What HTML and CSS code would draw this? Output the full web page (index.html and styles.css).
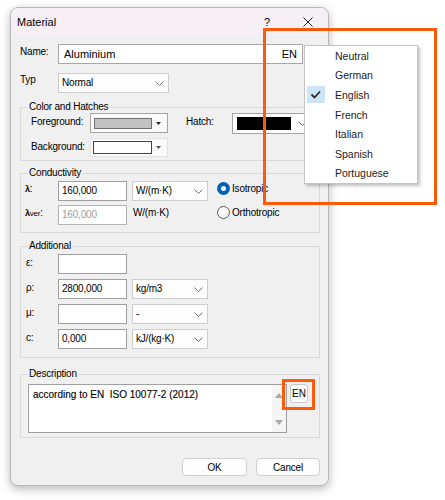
FILE: index.html
```html
<!DOCTYPE html>
<html lang="en">

<head>
    <meta charset="utf-8">
    <title>Material</title>
    <link rel="stylesheet" href="styles.css">
</head>

<body>
    <div class="dialog">
        <div class="titlebar">
            <span class="title">Material</span>
            <span class="help">?</span>
            <span class="close">
                <svg width="10" height="10" viewBox="0 0 10 10"><path d="M0.5 0.5 L9.5 9.5 M9.5 0.5 L0.5 9.5" stroke="#1e1e1e" stroke-width="1" fill="none"/></svg>
            </span>
        </div>

        <div class="content">
            <div class="row name-row">
                <label class="lbl">Name:</label>
                <div class="field name-field"><span>Aluminium</span><span>EN</span></div>
            </div>
            <div class="row typ-row">
                <label class="lbl">Typ</label>
                <div class="combo typ">Normal
                    <svg class="chev" width="9" height="5" viewBox="0 0 9 5"><polyline points="0.5,0.5 4.5,4.5 8.5,0.5" fill="none" stroke="#707070"/></svg>
                </div>
            </div>

            <fieldset class="group colors">
                <legend>Color and Hatches</legend>
                <div class="row">
                    <label class="lbl-c">Foreground:</label>
                    <div class="swatch-box fg">
                        <span class="swatch grey"></span>
                        <svg width="5" height="3" viewBox="0 0 5 3"><polygon points="0,0 5,0 2.5,3" fill="#222"/></svg>
                    </div>
                    <label class="lbl-hatch">Hatch:</label>
                    <div class="combo hatch">
                        <span class="swatch black"></span>
                        <svg class="chev" width="9" height="5" viewBox="0 0 9 5"><polyline points="0.5,0.5 4.5,4.5 8.5,0.5" fill="none" stroke="#707070"/></svg>
                    </div>
                </div>
                <div class="row">
                    <label class="lbl-c">Background:</label>
                    <div class="swatch-box bg">
                        <span class="swatch white"></span>
                        <svg width="5" height="3" viewBox="0 0 5 3"><polygon points="0,0 5,0 2.5,3" fill="#555"/></svg>
                    </div>
                </div>
            </fieldset>

            <fieldset class="group conduct">
                <legend>Conductivity</legend>
                <div class="row">
                    <label class="lbl-s"><span class="sym">λ</span>:</label>
                    <div class="input">160,000</div>
                    <div class="combo unit">W/(m·K)
                        <svg class="chev" width="9" height="5" viewBox="0 0 9 5"><polyline points="0.5,0.5 4.5,4.5 8.5,0.5" fill="none" stroke="#707070"/></svg>
                    </div>
                    <div class="radio">
                        <span class="dot on"></span>
                        <span>Isotropic</span>
                    </div>
                </div>
                <div class="row">
                    <label class="lbl-s"><span class="sym">λ</span><span class="sub">ver</span>:</label>
                    <div class="input off">160,000</div>
                    <div class="unit-text">W/(m·K)</div>
                    <div class="radio">
                        <span class="dot"></span>
                        <span>Orthotropic</span>
                    </div>
                </div>
            </fieldset>

            <fieldset class="group extra">
                <legend>Additional</legend>
                <div class="row">
                    <label class="lbl-s">ε:</label>
                    <div class="input"></div>
                </div>
                <div class="row">
                    <label class="lbl-s">ρ:</label>
                    <div class="input">2800,000</div>
                    <div class="combo unit">kg/m3
                        <svg class="chev" width="9" height="5" viewBox="0 0 9 5"><polyline points="0.5,0.5 4.5,4.5 8.5,0.5" fill="none" stroke="#707070"/></svg>
                    </div>
                </div>
                <div class="row">
                    <label class="lbl-s">μ:</label>
                    <div class="input"></div>
                    <div class="combo unit">-
                        <svg class="chev" width="9" height="5" viewBox="0 0 9 5"><polyline points="0.5,0.5 4.5,4.5 8.5,0.5" fill="none" stroke="#707070"/></svg>
                    </div>
                </div>
                <div class="row">
                    <label class="lbl-s">c:</label>
                    <div class="input">0,000</div>
                    <div class="combo unit">kJ/(kg·K)
                        <svg class="chev" width="9" height="5" viewBox="0 0 9 5"><polyline points="0.5,0.5 4.5,4.5 8.5,0.5" fill="none" stroke="#707070"/></svg>
                    </div>
                </div>
            </fieldset>

            <fieldset class="group desc">
                <legend>Description</legend>
                <div class="row">
                    <div class="memo">
                        <div class="memo-text">according to EN&nbsp; ISO 10077-2 (2012)</div>
                        <div class="scroll">
                            <svg width="8" height="5" viewBox="0 0 8 5"><polygon points="0,5 8,5 4,0" fill="#a9a9a9"/></svg>
                            <svg width="8" height="5" viewBox="0 0 8 5"><polygon points="0,0 8,0 4,5" fill="#a9a9a9"/></svg>
                        </div>
                    </div>
                    <button class="lang-btn">EN</button>
                </div>
            </fieldset>

            <div class="buttons">
                <button class="btn">OK</button>
                <button class="btn">Cancel</button>
            </div>
        </div>
    </div>

    <!-- language popup -->
    <div class="lang-menu">
        <div class="item"><span class="check"></span>Neutral</div>
        <div class="item"><span class="check"></span>German</div>
        <div class="item"><span class="check on">
            <svg width="18" height="17" viewBox="0 0 18 17"><polyline points="4.5,8.5 7.5,11.5 13,5.5" fill="none" stroke="#2b2b2b" stroke-width="1.8"/></svg>
        </span>English</div>
        <div class="item"><span class="check"></span>French</div>
        <div class="item"><span class="check"></span>Italian</div>
        <div class="item"><span class="check"></span>Spanish</div>
        <div class="item"><span class="check"></span>Portuguese</div>
    </div>

    <div class="mark mark-big"></div>
    <div class="mark mark-small"></div>
</body>

</html>
```

FILE: styles.css
```css
* {
    box-sizing: border-box;
}

body {
    margin: 0;
    width: 445px;
    height: 500px;
    overflow: hidden;
    position: relative;
    background-color: #fff;
    font-family: "Liberation Sans", Arial, sans-serif;
    font-size: 10px;
    letter-spacing: -0.2px;
    color: #000;
}

/* window */

.dialog {
    margin: 7px 0 0 10px;
    width: 319px;
    height: 479px;
    border: 1px solid #b8b8b8;
    border-radius: 8px;
    background-color: #f0f0f0;
    box-shadow: 0 3px 10px rgba(0, 0, 0, 0.28);
    overflow: hidden;
}

.titlebar {
    height: 27px;
    display: flex;
    align-items: center;
    padding-left: 6px;
    background-color: #f6eff6;
}

.title {
    flex: 1;
    font-size: 11px;
    letter-spacing: 0;
}

.help {
    width: 20px;
    margin-right: 19px;
    text-align: center;
    font-size: 11px;
}

.close {
    width: 24px;
    margin-right: 8px;
    display: flex;
    justify-content: center;
}

.content {
    padding: 9px 8px 0 9px;
}

.row {
    display: flex;
    align-items: flex-start;
    line-height: 12px;
}

/* name + typ */

.lbl {
    width: 38px;
}

.name-row {
    height: 20px;
    margin-bottom: 9px;
}

.name-row .lbl {
    padding-top: 2px;
}

.typ-row .lbl {
    padding-top: 1px;
}

.field {
    height: 20px;
    background-color: #fff;
    border: 1px solid #a8a8a8;
}

.name-field {
    width: 245px;
    display: flex;
    justify-content: space-between;
    align-items: center;
    padding: 0 5px;
    font-size: 11px;
    letter-spacing: 0;
}

.combo {
    height: 20px;
    display: flex;
    align-items: center;
    justify-content: space-between;
    padding: 0 4px 0 3px;
    background-color: #fdfdfd;
    border: 1px solid #cdcdcd;
}

.typ {
    width: 111px;
}

/* group boxes */

.group {
    margin: 0;
    min-width: 0;
    padding: 0;
    border: 1px solid #d9d9d9;
}

.group legend {
    padding: 0 2px;
    height: 12px;
    line-height: 12px;
}

.colors {
    margin-top: 8px;
    padding: 0 0 3px 10px;
}

.colors legend {
    margin-left: -4px;
}

.colors .row + .row {
    margin-top: 4px;
}

.lbl-c {
    width: 59px;
    padding-top: 3px;
}

.swatch-box {
    width: 78px;
    height: 20px;
    display: flex;
    align-items: center;
    gap: 4px;
    padding-left: 3px;
    border: 1px solid #a4a4a4;
    background-color: #fafafa;
}

.swatch-box.bg {
    height: 19px;
    padding-left: 2px;
    border-color: #e2e2e2;
}

.swatch {
    display: block;
    border: 1px solid #6e6e6e;
}

.swatch.grey {
    width: 58px;
    height: 11px;
    background-color: #c2c2c2;
}

.swatch.white {
    width: 59px;
    height: 13px;
    background-color: #fff;
    border-color: #444;
}

.swatch.black {
    width: 54px;
    height: 13px;
    background-color: #000;
    border-color: #000;
}

.lbl-hatch {
    width: 46px;
    margin-left: 18px;
    padding-top: 3px;
}

.hatch {
    width: 80px;
    height: 21px;
    padding-left: 4px;
    border-color: #a4a4a4;
}

.conduct {
    margin-top: 6px;
    padding: 2px 0 7px 4px;
}

.conduct legend {
    margin-left: 2px;
}

.conduct .row + .row {
    margin-top: 4px;
}

.extra {
    margin-top: 7px;
    padding: 2px 0 8px 5px;
}

.extra legend {
    margin-left: 1px;
}

.extra .row + .row {
    margin-top: 5px;
}

.extra .lbl-s {
    width: 32px;
    padding-top: 3px;
}

.lbl-s {
    width: 33px;
    padding-top: 2px;
}

.sym {
    font-size: 9px;
    font-weight: bold;
}

.sub {
    font-size: 8px;
}

.input {
    width: 69px;
    height: 20px;
    padding: 0 3px;
    line-height: 17px;
    background-color: #fff;
    border: 1px solid #a0a0a0;
}

.input.off {
    color: #9c9c9c;
    border-color: #b4b4b4;
}

.unit {
    width: 76px;
    margin-left: 5px;
}

.unit-text {
    width: 76px;
    margin-left: 5px;
    padding: 2px 0 0 1px;
}

.radio {
    display: flex;
    align-items: center;
    gap: 2px;
    margin: 1px 0 0 9px;
}

.dot {
    width: 13px;
    height: 13px;
    border-radius: 50%;
    border: 1px solid #5c5c5c;
    background-color: #f7f7f7;
}

.dot.on {
    border: 4px solid #0061b8;
    background-color: #fff;
}

.desc {
    margin-top: 10px;
    padding: 4px 0 4px 7px;
}

.desc legend {
    margin-left: -1px;
}

.memo {
    width: 259px;
    height: 49px;
    display: flex;
    background-color: #fff;
    border: 1px solid #a0a0a0;
}

.memo-text {
    flex: 1;
    padding: 3px 0 0 4px;
    line-height: 14px;
    font-size: 10px;
    letter-spacing: 0;
    -webkit-text-stroke: 0.12px #000;
}

.scroll {
    width: 14px;
    display: flex;
    flex-direction: column;
    justify-content: space-between;
    align-items: center;
    padding: 8px 0 7px;
    background-color: #f5f5f5;
}

.lang-btn {
    width: 18px;
    height: 19px;
    margin-left: 3px;
    padding: 0;
    font-family: inherit;
    font-size: 10px;
    letter-spacing: 0;
    background-color: #fdfdfd;
    border: 1px solid #c9c9c9;
    border-radius: 3px;
}

.buttons {
    display: flex;
    justify-content: flex-end;
    gap: 9px;
    margin-top: 20px;
}

.btn {
    width: 65px;
    height: 18px;
    padding: 0;
    font-family: inherit;
    font-size: 10px;
    letter-spacing: -0.2px;
    background-color: #fdfdfd;
    border: 1px solid #cfcfcf;
    border-radius: 4px;
}

.btn + .btn {
    width: 64px;
}

/* popup menu */

.lang-menu {
    position: absolute;
    left: 304px;
    top: 45px;
    width: 114px;
    background-color: #fff;
    border: 1px solid #c4c4c4;
    box-shadow: 2px 2px 3px rgba(0, 0, 0, 0.25);
    font-size: 10.5px;
    letter-spacing: 0;
    color: #1c1c1c;
}

.item {
    height: 19.6px;
    display: flex;
    align-items: center;
    padding-left: 2px;
}

.check {
    width: 18px;
    height: 17px;
    margin-right: 10px;
}

.check.on {
    background-color: #cce4f7;
}

.check svg {
    display: block;
}

/* annotation marks */

.mark {
    position: absolute;
    border: 3px solid #ff5a0a;
}

.mark-big {
    left: 263px;
    top: 28px;
    width: 174px;
    height: 177px;
}

.mark-small {
    left: 282px;
    top: 379px;
    width: 33px;
    height: 31px;
}
```
